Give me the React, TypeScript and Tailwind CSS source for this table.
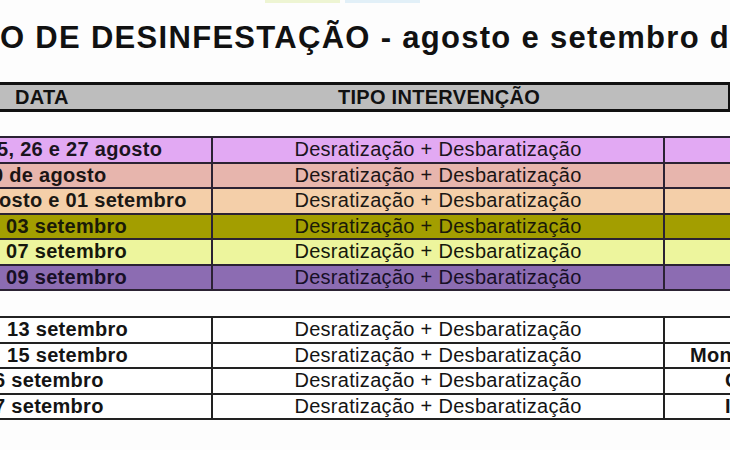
import React from "react";

const coloredRows = [
    { date: "5, 26 e 27 agosto", bg: "bg-[#e2a9f3]", shift: "ml-[-3px]", text: "text-[#1b1420]" },
    { date: "0 de agosto", bg: "bg-[#e7b5ad]", shift: "ml-[-8px]", text: "text-[#1b1414]" },
    { date: "osto e 01 setembro", bg: "bg-[#f4cfa9]", shift: "ml-[-1px]", text: "text-[#1b1814]" },
    { date: "03 setembro", bg: "bg-[#a39e00]", shift: "ml-[6px]", text: "text-[#1a1a08]" },
    { date: "07 setembro", bg: "bg-[#edf59d]", shift: "ml-[6px]", text: "text-[#16180c]" },
    { date: "09 setembro", bg: "bg-[#8c6cb2]", shift: "ml-[6px]", text: "text-[#170f26]" },
];

const plainRows = [
    { date: "13 setembro", shift: "ml-[7px]", local: "" },
    { date: "15 setembro", shift: "ml-[7px]", local: "Mon" },
    { date: "6 setembro", shift: "ml-[-6px]", local: "C" },
    { date: "7 setembro", shift: "ml-[-6px]", local: "I" },
];

const intervention = "Desratização + Desbaratização";

export default function App() {
    return (
        <div className="w-[730px] h-[450px] overflow-hidden bg-[#fdfdfd] font-['Liberation_Sans',Arial,sans-serif] text-[#111]">
            {/* faint remains of the logo at the very top */}
            <div className="flex h-[3px]">
                <div className="ml-[265px] w-[75px] bg-[#eef5d3]" />
                <div className="ml-[5px] w-[75px] bg-[#e2f0f8]" />
            </div>

            <h1 className="mt-[16.5px] text-[31px] leading-[36px] font-bold tracking-[1.3px] whitespace-nowrap">
                O DE DESINFESTAÇÃO - agosto e setembro de
            </h1>

            {/* header */}
            <div className="mt-[26.5px] flex h-[30px] border-y-[3px] border-r-2 border-[#111] bg-[#bdbdbd] text-[20px] leading-[24px] font-bold tracking-[0.3px]">
                <div className="w-[213px] pl-[15px]">DATA</div>
                <div className="w-[452px] text-center">TIPO INTERVENÇÃO</div>
                <div className="flex-1" />
            </div>

            {/* coloured block */}
            <div className="mt-[24px] border-t-2 border-[#2b2233]">
                {coloredRows.map((row, i) => (
                    <div key={i} className={`flex h-[25.5px] border-b-2 border-[#2b2233] text-[20px] leading-[23.5px] tracking-[0.3px] ${row.bg} ${row.text}`}>
                        <div className="w-[213px] shrink-0 border-r-2 border-[#2b2233] whitespace-nowrap">
                            <span className={`inline-block font-bold ${row.shift}`}>{row.date}</span>
                        </div>
                        <div className="w-[452px] shrink-0 border-r-2 border-[#2b2233] text-center whitespace-nowrap">
                            {intervention}
                        </div>
                        <div className="flex-1" />
                    </div>
                ))}
            </div>

            {/* plain block */}
            <div className="mt-[25px] border-t-2 border-[#222]">
                {plainRows.map((row, i) => (
                    <div key={i} className="flex h-[25.5px] border-b-2 border-[#222] bg-white text-[20px] leading-[23.5px] tracking-[0.3px] text-[#141414]">
                        <div className="w-[213px] shrink-0 border-r-2 border-[#222] whitespace-nowrap">
                            <span className={`inline-block font-bold ${row.shift}`}>{row.date}</span>
                        </div>
                        <div className="w-[452px] shrink-0 border-r-2 border-[#222] text-center whitespace-nowrap">
                            {intervention}
                        </div>
                        <div className={`flex-1 whitespace-nowrap font-bold ${i === 1 ? "pl-[25px]" : "pl-[60px]"}`}>
                            {row.local}
                        </div>
                    </div>
                ))}
            </div>
        </div>
    );
}
